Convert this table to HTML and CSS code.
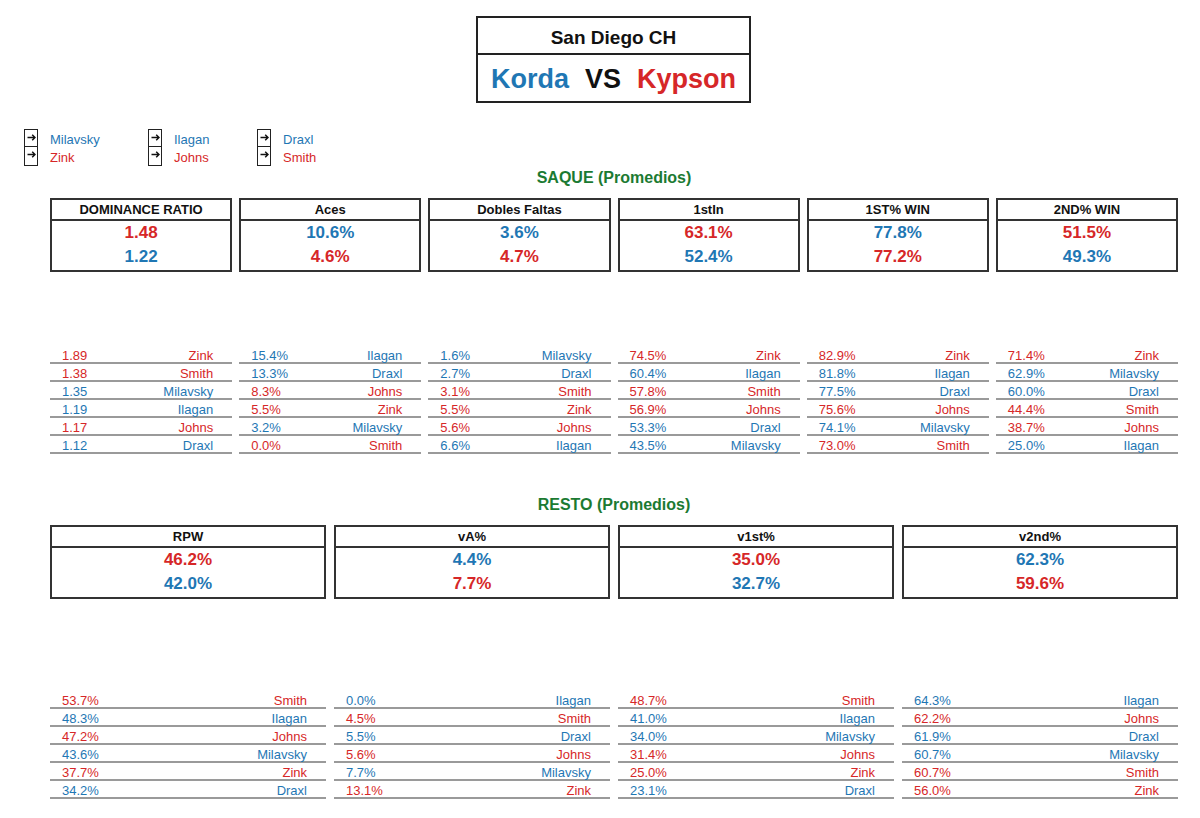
FILE: index.html
```html
<!DOCTYPE html>
<html lang="es">
<head>
<meta charset="utf-8">
<title>San Diego CH - Korda VS Kypson</title>
<link rel="stylesheet" href="styles.css">
</head>
<body>
<div class="page">
  <div class="match">
    <div class="match-title">San Diego CH</div>
    <div class="match-vs"><span class="blue">Korda</span><span class="vs">VS</span><span class="red">Kypson</span></div>
  </div>

  <div class="legend">
    <div class="lg lg-1">
      <div class="lg-box">
        <span class="lg-cell"><svg class="arrow" viewBox="0 0 9 7"><path d="M0.5 3.5H8M5.2 0.8L8 3.5L5.2 6.2"/></svg></span>
        <span class="lg-cell"><svg class="arrow" viewBox="0 0 9 7"><path d="M0.5 3.5H8M5.2 0.8L8 3.5L5.2 6.2"/></svg></span>
      </div>
      <div class="lg-names"><span class="blue">Milavsky</span><span class="red">Zink</span></div>
    </div>
    <div class="lg lg-2">
      <div class="lg-box">
        <span class="lg-cell"><svg class="arrow" viewBox="0 0 9 7"><path d="M0.5 3.5H8M5.2 0.8L8 3.5L5.2 6.2"/></svg></span>
        <span class="lg-cell"><svg class="arrow" viewBox="0 0 9 7"><path d="M0.5 3.5H8M5.2 0.8L8 3.5L5.2 6.2"/></svg></span>
      </div>
      <div class="lg-names"><span class="blue">Ilagan</span><span class="red">Johns</span></div>
    </div>
    <div class="lg lg-3">
      <div class="lg-box">
        <span class="lg-cell"><svg class="arrow" viewBox="0 0 9 7"><path d="M0.5 3.5H8M5.2 0.8L8 3.5L5.2 6.2"/></svg></span>
        <span class="lg-cell"><svg class="arrow" viewBox="0 0 9 7"><path d="M0.5 3.5H8M5.2 0.8L8 3.5L5.2 6.2"/></svg></span>
      </div>
      <div class="lg-names"><span class="blue">Draxl</span><span class="red">Smith</span></div>
    </div>
  </div>

  <div class="section">
    <h2 class="section-title">SAQUE (Promedios)</h2>
    <div class="cards cards-6">
      <div class="card"><div class="card-head">DOMINANCE RATIO</div><div class="card-body"><div class="val red">1.48</div><div class="val blue">1.22</div></div></div>
      <div class="card"><div class="card-head">Aces</div><div class="card-body"><div class="val blue">10.6%</div><div class="val red">4.6%</div></div></div>
      <div class="card"><div class="card-head">Dobles Faltas</div><div class="card-body"><div class="val blue">3.6%</div><div class="val red">4.7%</div></div></div>
      <div class="card"><div class="card-head">1stIn</div><div class="card-body"><div class="val red">63.1%</div><div class="val blue">52.4%</div></div></div>
      <div class="card"><div class="card-head">1ST% WIN</div><div class="card-body"><div class="val blue">77.8%</div><div class="val red">77.2%</div></div></div>
      <div class="card"><div class="card-head">2ND% WIN</div><div class="card-body"><div class="val red">51.5%</div><div class="val blue">49.3%</div></div></div>
    </div>

    <div class="lists lists-6 lists-saque">
      <div class="list">
        <div class="row red"><span>1.89</span><span>Zink</span></div>
        <div class="row red"><span>1.38</span><span>Smith</span></div>
        <div class="row blue"><span>1.35</span><span>Milavsky</span></div>
        <div class="row blue"><span>1.19</span><span>Ilagan</span></div>
        <div class="row red"><span>1.17</span><span>Johns</span></div>
        <div class="row blue"><span>1.12</span><span>Draxl</span></div>
      </div>
      <div class="list">
        <div class="row blue"><span>15.4%</span><span>Ilagan</span></div>
        <div class="row blue"><span>13.3%</span><span>Draxl</span></div>
        <div class="row red"><span>8.3%</span><span>Johns</span></div>
        <div class="row red"><span>5.5%</span><span>Zink</span></div>
        <div class="row blue"><span>3.2%</span><span>Milavsky</span></div>
        <div class="row red"><span>0.0%</span><span>Smith</span></div>
      </div>
      <div class="list">
        <div class="row blue"><span>1.6%</span><span>Milavsky</span></div>
        <div class="row blue"><span>2.7%</span><span>Draxl</span></div>
        <div class="row red"><span>3.1%</span><span>Smith</span></div>
        <div class="row red"><span>5.5%</span><span>Zink</span></div>
        <div class="row red"><span>5.6%</span><span>Johns</span></div>
        <div class="row blue"><span>6.6%</span><span>Ilagan</span></div>
      </div>
      <div class="list">
        <div class="row red"><span>74.5%</span><span>Zink</span></div>
        <div class="row blue"><span>60.4%</span><span>Ilagan</span></div>
        <div class="row red"><span>57.8%</span><span>Smith</span></div>
        <div class="row red"><span>56.9%</span><span>Johns</span></div>
        <div class="row blue"><span>53.3%</span><span>Draxl</span></div>
        <div class="row blue"><span>43.5%</span><span>Milavsky</span></div>
      </div>
      <div class="list">
        <div class="row red"><span>82.9%</span><span>Zink</span></div>
        <div class="row blue"><span>81.8%</span><span>Ilagan</span></div>
        <div class="row blue"><span>77.5%</span><span>Draxl</span></div>
        <div class="row red"><span>75.6%</span><span>Johns</span></div>
        <div class="row blue"><span>74.1%</span><span>Milavsky</span></div>
        <div class="row red"><span>73.0%</span><span>Smith</span></div>
      </div>
      <div class="list">
        <div class="row red"><span>71.4%</span><span>Zink</span></div>
        <div class="row blue"><span>62.9%</span><span>Milavsky</span></div>
        <div class="row blue"><span>60.0%</span><span>Draxl</span></div>
        <div class="row red"><span>44.4%</span><span>Smith</span></div>
        <div class="row red"><span>38.7%</span><span>Johns</span></div>
        <div class="row blue"><span>25.0%</span><span>Ilagan</span></div>
      </div>
    </div>

    <h2 class="section-title section-title-resto">RESTO (Promedios)</h2>
    <div class="cards cards-4">
      <div class="card"><div class="card-head">RPW</div><div class="card-body"><div class="val red">46.2%</div><div class="val blue">42.0%</div></div></div>
      <div class="card"><div class="card-head">vA%</div><div class="card-body"><div class="val blue">4.4%</div><div class="val red">7.7%</div></div></div>
      <div class="card"><div class="card-head">v1st%</div><div class="card-body"><div class="val red">35.0%</div><div class="val blue">32.7%</div></div></div>
      <div class="card"><div class="card-head">v2nd%</div><div class="card-body"><div class="val blue">62.3%</div><div class="val red">59.6%</div></div></div>
    </div>

    <div class="lists lists-4 lists-resto">
      <div class="list">
        <div class="row red"><span>53.7%</span><span>Smith</span></div>
        <div class="row blue"><span>48.3%</span><span>Ilagan</span></div>
        <div class="row red"><span>47.2%</span><span>Johns</span></div>
        <div class="row blue"><span>43.6%</span><span>Milavsky</span></div>
        <div class="row red"><span>37.7%</span><span>Zink</span></div>
        <div class="row blue"><span>34.2%</span><span>Draxl</span></div>
      </div>
      <div class="list">
        <div class="row blue"><span>0.0%</span><span>Ilagan</span></div>
        <div class="row red"><span>4.5%</span><span>Smith</span></div>
        <div class="row blue"><span>5.5%</span><span>Draxl</span></div>
        <div class="row red"><span>5.6%</span><span>Johns</span></div>
        <div class="row blue"><span>7.7%</span><span>Milavsky</span></div>
        <div class="row red"><span>13.1%</span><span>Zink</span></div>
      </div>
      <div class="list">
        <div class="row red"><span>48.7%</span><span>Smith</span></div>
        <div class="row blue"><span>41.0%</span><span>Ilagan</span></div>
        <div class="row blue"><span>34.0%</span><span>Milavsky</span></div>
        <div class="row red"><span>31.4%</span><span>Johns</span></div>
        <div class="row red"><span>25.0%</span><span>Zink</span></div>
        <div class="row blue"><span>23.1%</span><span>Draxl</span></div>
      </div>
      <div class="list">
        <div class="row blue"><span>64.3%</span><span>Ilagan</span></div>
        <div class="row red"><span>62.2%</span><span>Johns</span></div>
        <div class="row blue"><span>61.9%</span><span>Draxl</span></div>
        <div class="row blue"><span>60.7%</span><span>Milavsky</span></div>
        <div class="row red"><span>60.7%</span><span>Smith</span></div>
        <div class="row red"><span>56.0%</span><span>Zink</span></div>
      </div>
    </div>
  </div>
</div>
</body>
</html>
```

FILE: styles.css
```css
* { box-sizing: border-box; }

html, body {
  margin: 0;
  padding: 0;
  background: #ffffff;
}

body {
  font-family: "Liberation Sans", Arial, Helvetica, sans-serif;
  color: #111111;
}

.page {
  width: 1200px;
  padding-top: 16px;
}

.blue { color: #1f77b4; }
.red { color: #d62728; }

/* Match header */
.match {
  width: 275px;
  margin-left: 476px;
  border: 2px solid #222222;
}

.match-title {
  height: 37px;
  padding-top: 7px;
  line-height: 26px;
  text-align: center;
  font-size: 19px;
  font-weight: bold;
  border-bottom: 2px solid #222222;
}

.match-vs {
  height: 46px;
  display: flex;
  justify-content: center;
  align-items: center;
  gap: 16px;
  font-size: 27px;
  font-weight: bold;
  padding-top: 3px;
}

.match-vs .vs { color: #111111; }

/* Legend */
.legend {
  display: flex;
  margin-top: 26px;
  margin-left: 24px;
}

.lg {
  display: flex;
  gap: 12px;
}

.lg-1 { width: 124px; }
.lg-2 { width: 109px; }
.lg-3 { width: 120px; }

.lg-box {
  width: 14px;
  display: flex;
  flex-direction: column;
  border: 1px solid #222222;
}

.lg-cell {
  display: block;
  height: 16px;
  padding: 4px 0 0 2px;
}

.lg-cell + .lg-cell {
  border-top: 1px solid #222222;
  height: 17px;
}

.arrow {
  display: block;
  width: 9px;
  height: 7px;
}

.arrow path {
  fill: none;
  stroke: #111111;
  stroke-width: 1.5;
}

.lg-names {
  display: flex;
  flex-direction: column;
  padding-top: 2px;
  font-size: 13px;
  line-height: 17.5px;
}

/* Sections */
.section {
  margin-left: 50px;
  width: 1128px;
}

.section-title {
  margin: 2px 0 0 0;
  height: 20px;
  line-height: 20px;
  font-size: 16px;
  font-weight: bold;
  text-align: center;
  color: #1b7a32;
}

.section-title-resto {
  margin-top: 41px;
}

.cards {
  display: grid;
  margin-top: 10px;
}

.cards-6 {
  grid-template-columns: repeat(6, 1fr);
  column-gap: 7px;
}

.cards-4 {
  grid-template-columns: repeat(4, 1fr);
  column-gap: 8px;
}

.card {
  border: 2px solid #333333;
  height: 74px;
}

.card-head {
  height: 21px;
  line-height: 19px;
  font-size: 13px;
  font-weight: bold;
  text-align: center;
  color: #111111;
  border-bottom: 2px solid #333333;
}

.card-body {
  text-align: center;
}

.val {
  font-size: 17px;
  font-weight: bold;
  line-height: 24px;
}

/* Ranking lists */
.lists {
  display: grid;
}

.lists-6 {
  grid-template-columns: repeat(6, 1fr);
  column-gap: 7px;
}

.lists-4 {
  grid-template-columns: repeat(4, 1fr);
  column-gap: 8px;
}

.lists-saque { margin-top: 74px; }
.lists-resto { margin-top: 92px; }

.row {
  display: flex;
  justify-content: space-between;
  height: 18px;
  padding: 3px 19px 0 12px;
  font-size: 13px;
  line-height: 13px;
  border-bottom: 2px solid #9a9a9a;
}
```
